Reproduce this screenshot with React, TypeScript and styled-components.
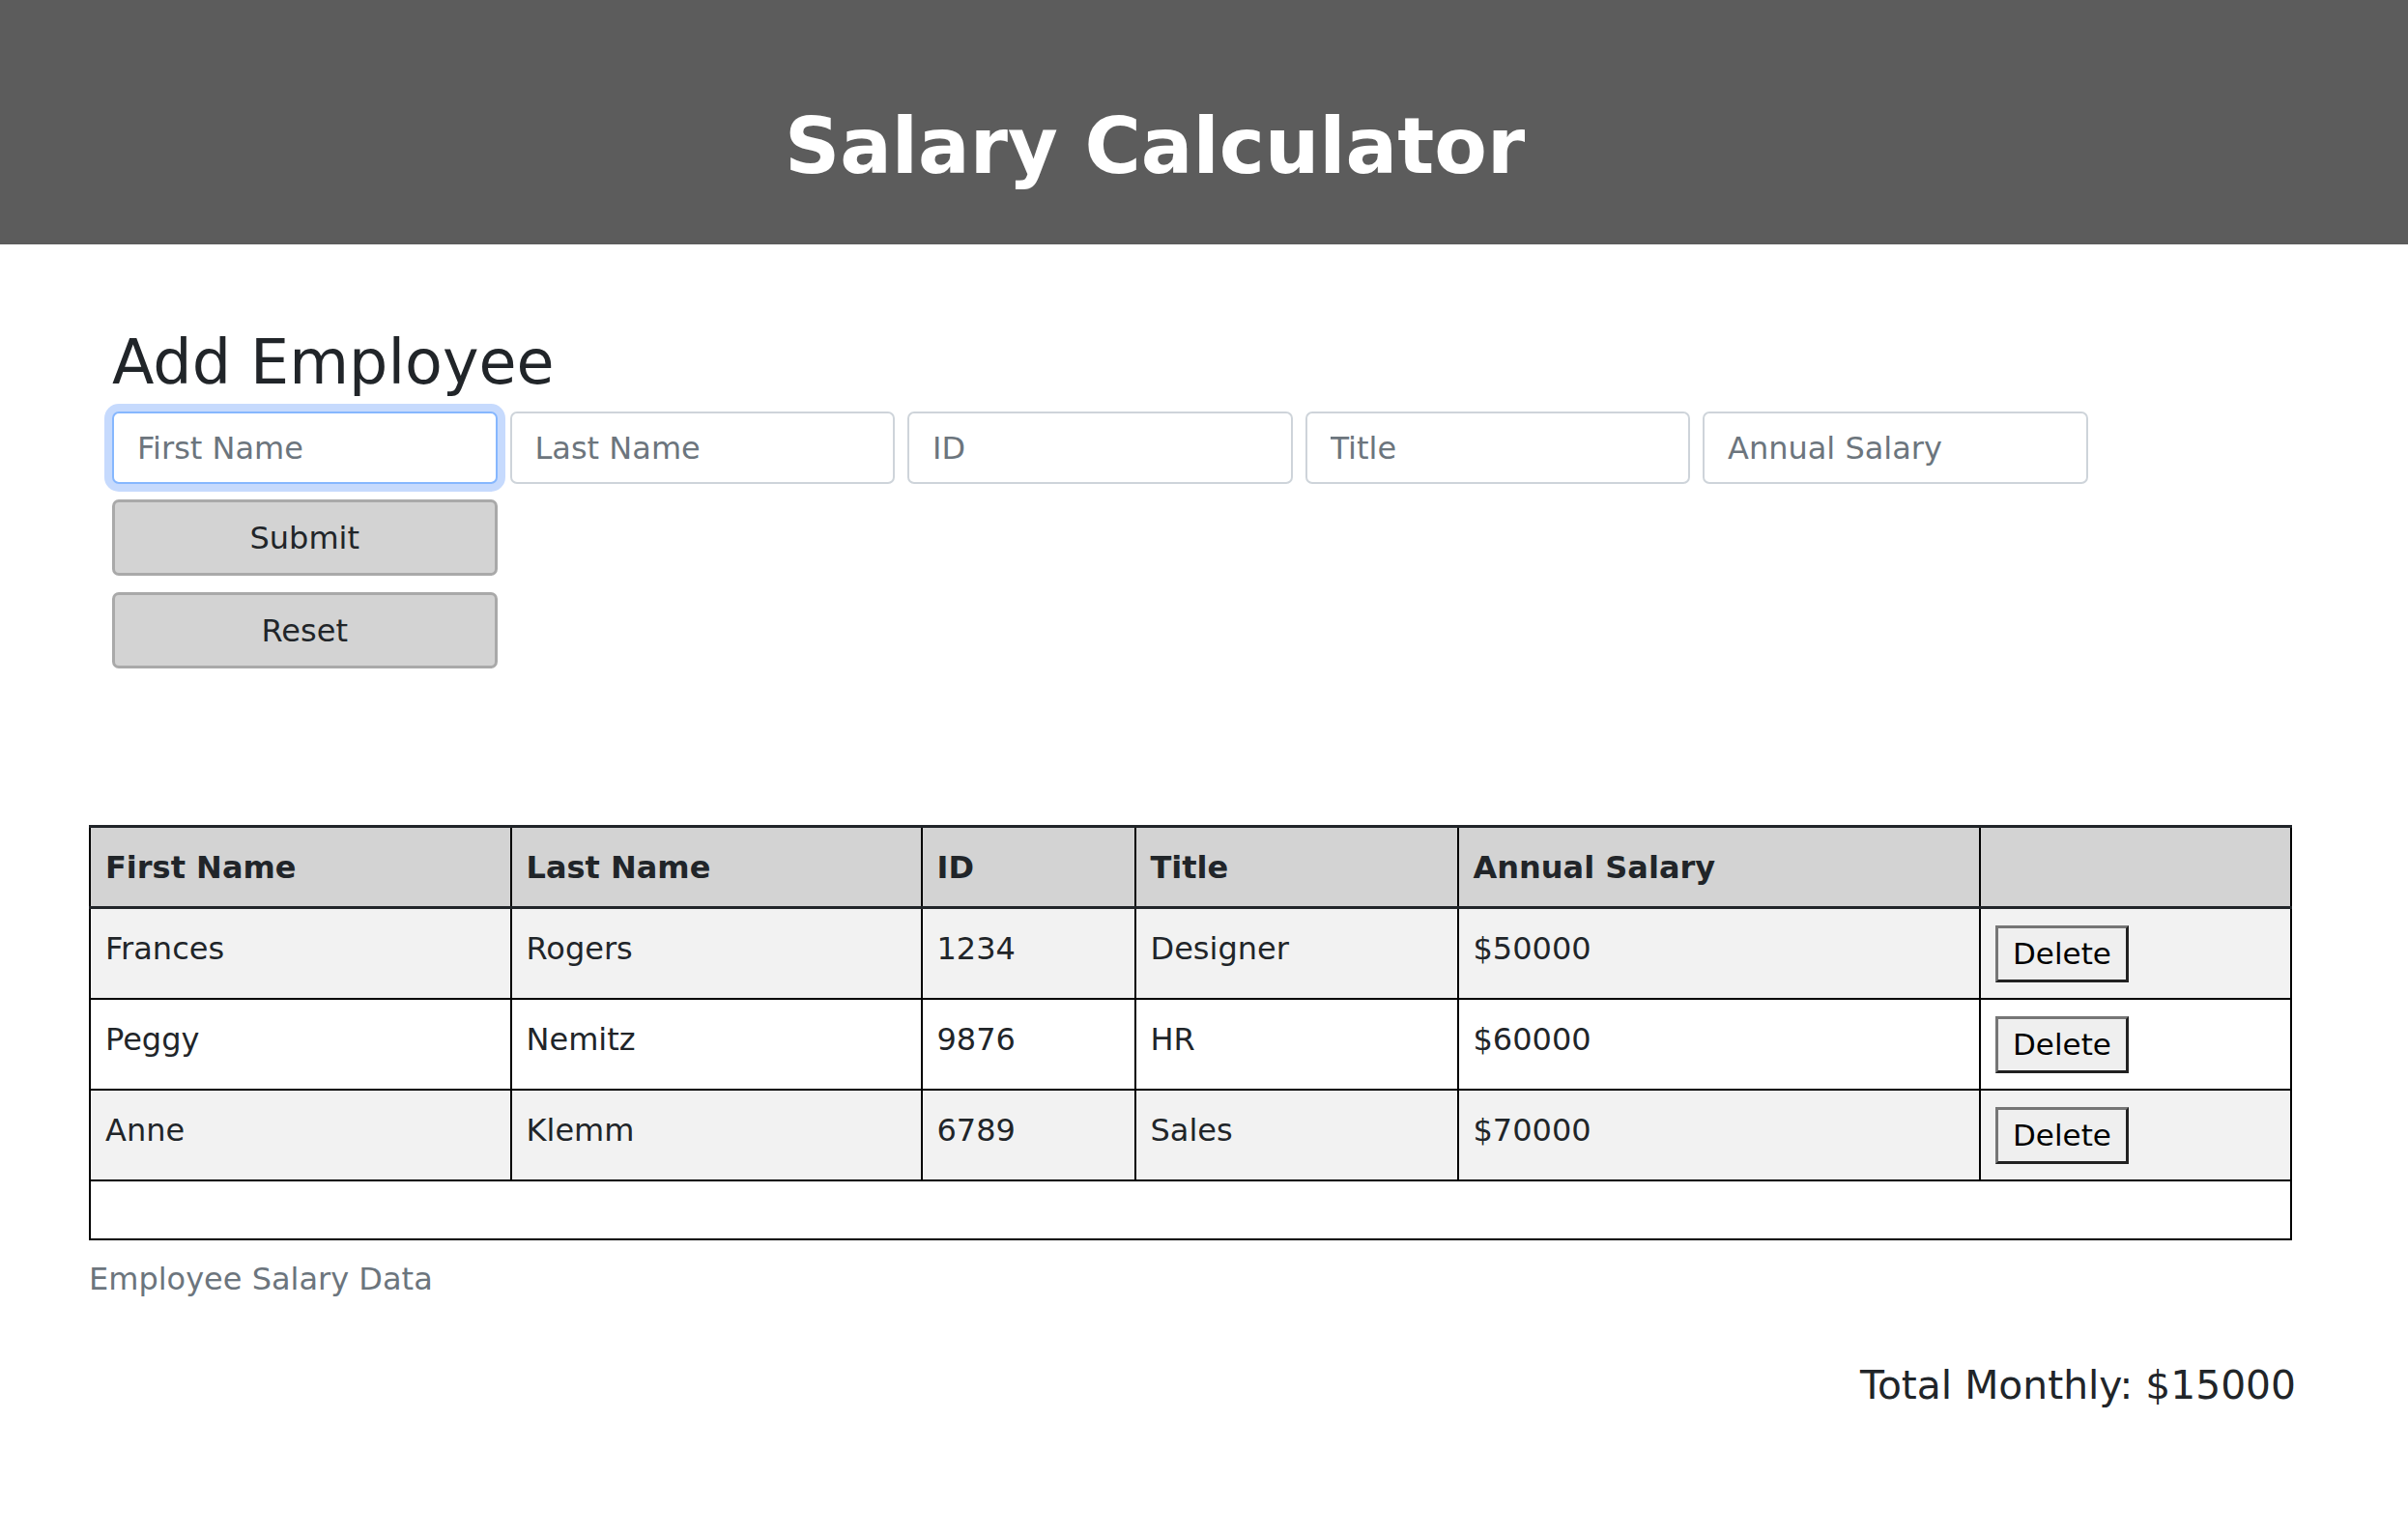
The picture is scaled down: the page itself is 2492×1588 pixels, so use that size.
import React from "react";
import styled, { createGlobalStyle, css } from "styled-components";

const GlobalStyle = createGlobalStyle`
  * { box-sizing: border-box; }
  html, body {
    margin: 0;
    padding: 0;
    background: #ffffff;
  }
  body {
    font-family: "DejaVu Sans", Verdana, sans-serif;
    font-size: 32px;
    line-height: 1.5;
    color: #212529;
  }
`;

const Page = styled.div`
  width: 2492px;
  min-height: 1588px;
  background: #ffffff;
`;

const Header = styled.header`
  height: 253px;
  background: #5c5c5c;
  padding: 105px 102px 0 0;
  text-align: center;
`;

const Title = styled.h1`
  margin: 0;
  font-family: "DejaVu Sans", Verdana, sans-serif;
  font-size: 79.5px;
  font-weight: 700;
  line-height: 94.8px;
  color: #ffffff;
`;

const Main = styled.main`
  padding: 0 120px 0 92px;
`;

const FormSection = styled.section`
  padding-left: 24px;
  padding-top: 84px;
`;

const SectionTitle = styled.h2`
  margin: 0;
  font-size: 63.5px;
  font-weight: 400;
  line-height: 76px;
  color: #212529;
`;

const InputRow = styled.div`
  display: flex;
  gap: 13px;
  margin-top: 13px;
`;

const TextInput = styled.input<{ $focused?: boolean }>`
  width: 398.5px;
  height: 75px;
  padding: 0 24px;
  border: 2px solid #ced4da;
  border-radius: 7px;
  background: #ffffff;
  font-family: "DejaVu Sans", Verdana, sans-serif;
  font-size: 32px;
  color: #212529;
  outline: none;
  &::placeholder {
    color: #6c757d;
    opacity: 1;
  }
  ${(p) =>
    p.$focused &&
    css`
      border-color: #86b7fe;
      box-shadow: 0 0 0 8px #c6dafd;
    `}
`;

const ButtonStack = styled.div`
  display: flex;
  flex-direction: column;
  gap: 17px;
  margin-top: 16px;
  width: 398.5px;
`;

const FormButton = styled.button`
  height: 79px;
  width: 100%;
  background: #d3d3d3;
  border: 3px solid #a9a9a9;
  border-radius: 7px;
  font-family: "DejaVu Sans", Verdana, sans-serif;
  font-size: 32px;
  color: #212529;
  padding: 0;
  cursor: pointer;
`;

const Table = styled.table`
  margin-top: 162px;
  width: 2280px;
  table-layout: fixed;
  border-collapse: collapse;
  border: 2px solid #000000;
  font-size: 32px;
  line-height: 1.5;
  color: #212529;
`;

const Caption = styled.caption`
  caption-side: bottom;
  text-align: left;
  padding: 16px 0;
  color: #6c757d;
`;

const HeadCell = styled.th`
  background: #d3d3d3;
  font-weight: 700;
  text-align: left;
  padding: 16.5px 15px;
  border: 2px solid #000000;
  border-top: 3px solid #212529;
  border-bottom: 3px solid #212529;
`;

const BodyRow = styled.tr<{ $shaded: boolean }>`
  background: ${(p) => (p.$shaded ? "#f2f2f2" : "#ffffff")};
`;

const Cell = styled.td`
  padding: 16.5px 15px;
  border: 2px solid #000000;
  vertical-align: top;
  text-align: left;
`;

const FooterCell = styled.td`
  height: 61px;
  padding: 0;
  border: 2px solid #000000;
`;

const DeleteButton = styled.button`
  display: block;
  height: 59px;
  padding: 0 15px;
  background: #efefef;
  border: 3px solid;
  border-color: #767676 #222222 #222222 #767676;
  border-radius: 0;
  font-family: "DejaVu Sans", Verdana, sans-serif;
  font-size: 31px;
  color: #000000;
  cursor: pointer;
`;

const TotalRow = styled.h5`
  margin: 46px -4px 0 0;
  text-align: right;
  font-size: 40.8px;
  font-weight: 400;
  line-height: 48px;
  color: #212529;
`;

type Employee = {
  first: string;
  last: string;
  id: string;
  title: string;
  salary: number;
};

const employees: Employee[] = [
  { first: "Frances", last: "Rogers", id: "1234", title: "Designer", salary: 50000 },
  { first: "Peggy", last: "Nemitz", id: "9876", title: "HR", salary: 60000 },
  { first: "Anne", last: "Klemm", id: "6789", title: "Sales", salary: 70000 },
];

const columns = [435.5, 425, 221, 334, 540.5, 322];

export default function App() {
  return (
    <>
      <GlobalStyle />
      <Page>
        <Header>
          <Title>Salary Calculator</Title>
        </Header>
        <Main>
          <FormSection>
            <SectionTitle>Add Employee</SectionTitle>
            <InputRow>
              <TextInput $focused placeholder="First Name" />
              <TextInput placeholder="Last Name" />
              <TextInput placeholder="ID" />
              <TextInput placeholder="Title" />
              <TextInput placeholder="Annual Salary" />
            </InputRow>
            <ButtonStack>
              <FormButton>Submit</FormButton>
              <FormButton>Reset</FormButton>
            </ButtonStack>
          </FormSection>
          <Table>
            <Caption>Employee Salary Data</Caption>
            <colgroup>
              {columns.map((w, i) => (
                <col key={i} style={{ width: `${w}px` }} />
              ))}
            </colgroup>
            <thead>
              <tr>
                <HeadCell>First Name</HeadCell>
                <HeadCell>Last Name</HeadCell>
                <HeadCell>ID</HeadCell>
                <HeadCell>Title</HeadCell>
                <HeadCell>Annual Salary</HeadCell>
                <HeadCell></HeadCell>
              </tr>
            </thead>
            <tbody>
              {employees.map((e, i) => (
                <BodyRow key={e.id} $shaded={i % 2 === 0}>
                  <Cell>{e.first}</Cell>
                  <Cell>{e.last}</Cell>
                  <Cell>{e.id}</Cell>
                  <Cell>{e.title}</Cell>
                  <Cell>${e.salary}</Cell>
                  <Cell>
                    <DeleteButton>Delete</DeleteButton>
                  </Cell>
                </BodyRow>
              ))}
            </tbody>
            <tfoot>
              <tr>
                <FooterCell colSpan={6} />
              </tr>
            </tfoot>
          </Table>
          <TotalRow>Total Monthly: $15000</TotalRow>
        </Main>
      </Page>
    </>
  );
}
